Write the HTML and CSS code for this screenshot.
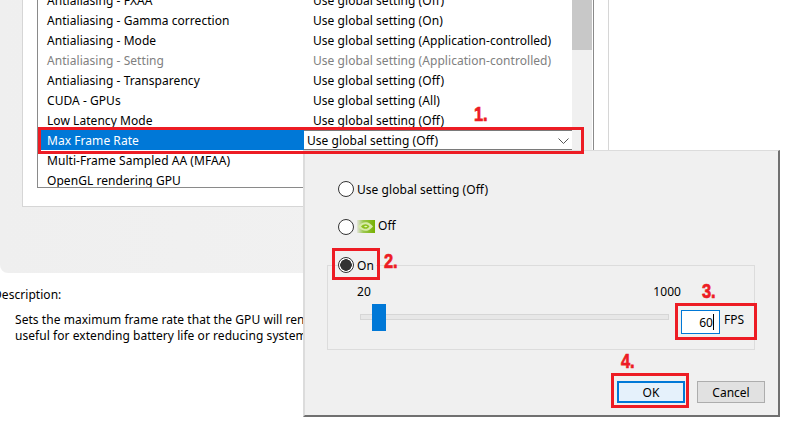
FILE: index.html
```html
<!DOCTYPE html>
<html lang="en">
<head>
<meta charset="utf-8">
<title>Max Frame Rate</title>
<link rel="stylesheet" href="styles.css">
</head>
<body>
<div class="page">
  <section class="panel">
    <div class="inner">
      <div class="listbox">
        <div class="rows">
          <div class="row"><span class="name">Antialiasing - FXAA</span><span class="val">Use global setting (Off)</span></div>
          <div class="row"><span class="name">Antialiasing - Gamma correction</span><span class="val">Use global setting (On)</span></div>
          <div class="row"><span class="name">Antialiasing - Mode</span><span class="val">Use global setting (Application-controlled)</span></div>
          <div class="row muted"><span class="name">Antialiasing - Setting</span><span class="val">Use global setting (Application-controlled)</span></div>
          <div class="row"><span class="name">Antialiasing - Transparency</span><span class="val">Use global setting (Off)</span></div>
          <div class="row"><span class="name">CUDA - GPUs</span><span class="val">Use global setting (All)</span></div>
          <div class="row"><span class="name">Low Latency Mode</span><span class="val">Use global setting (Off)</span></div>
          <div class="row selected"><span class="name">Max Frame Rate</span>
            <span class="combo">Use global setting (Off)
              <svg class="chevron" width="11" height="6" viewBox="0 0 11 6"><path d="M.5.5l5 5 5-5" fill="none" stroke="#555" stroke-width="1"/></svg>
            </span>
          </div>
          <div class="row"><span class="name">Multi-Frame Sampled AA (MFAA)</span></div>
          <div class="row"><span class="name">OpenGL rendering GPU</span></div>
        </div>
        <div class="scrollbar"><div class="thumb"></div></div>
      </div>
    </div>
  </section>
  <section class="desc">
    <p class="desc-title">Description:</p>
    <p class="desc-text">Sets the maximum frame rate that the GPU will render<br>useful for extending battery life or reducing system latency</p>
  </section>

  <div class="dialog">
    <label class="radio-row"><span class="radio"></span>Use global setting (Off)</label>
    <label class="radio-row"><span class="radio"></span>
      <svg class="nv" width="18" height="13" viewBox="0 0 18 13"><defs><linearGradient id="g" x1="0" x2="1" y1="0" y2="0"><stop offset="0" stop-color="#e4e4dc"/><stop offset=".35" stop-color="#9cc850"/><stop offset="1" stop-color="#76b000"/></linearGradient></defs><rect width="18" height="13" fill="url(#g)"/><path d="M1 6.500C4 2.500 8 1.500 11 2.500c2 .7 3.500 2.400 5 4-1.500 1.600-3 3.300-5 4-3 1-7 0-10-4z" fill="#d8eaa8"/><path d="M4 6.500C6 4 9 3.500 11 5c.8.6 1 1.200 1.500 1.500-.5.4-.8 1-1.500 1.500C9 9.500 6 9 4 6.500z" fill="#8cc020"/><path d="M7 6.500c1-1 2.500-1 3.500 0-1 1-2.500 1-3.500 0z" fill="#e6f2c4"/></svg>
      <span class="nv-label">Off</span></label>
    <div class="group">
      <label class="radio-row on-row"><span class="radio checked"></span>On</label>
      <div class="scale"><span>20</span><span>1000</span></div>
      <div class="control">
        <div class="slider"><div class="knob"></div></div>
        <div class="spin">60<span class="caret"></span></div>
        <span class="unit">FPS</span>
      </div>
    </div>
    <div class="buttons">
      <button class="btn primary">OK</button>
      <button class="btn">Cancel</button>
    </div>
  </div>

  <div class="mark mark-row"></div>
  <div class="mark mark-on"></div>
  <div class="mark mark-fps"></div>
  <div class="mark mark-ok"></div>
  <span class="step step1">1.</span>
  <span class="step step2">2.</span>
  <span class="step step3">3.</span>
  <span class="step step4">4.</span>
</div>
</body>
</html>
```
FILE: styles.css
```css
* { box-sizing: border-box; }
html, body { margin: 0; padding: 0; background: #fff; }
.page {
  position: relative;
  width: 800px;
  height: 437px;
  overflow: hidden;
  font-family: "Noto Sans", "Open Sans", sans-serif;
  font-size: 12px;
  letter-spacing: .05px;
  color: #000;
}
.panel {
  width: 609px;
  height: 273px;
  padding-left: 22px;
  background: linear-gradient(90deg, #efefef 0, #f1f1f1 60%, #f6f6f6 100%);
  border-bottom-left-radius: 8px;
}
.inner {
  height: 207px;
  padding-left: 14px;
  background: #fff;
  border-left: 1px solid #d6d6d6;
  border-right: 1px solid #d6d6d6;
  border-bottom: 1px solid #d6d6d6;
}
.listbox {
  display: flex;
  width: 557px;
  height: 188px;
  padding-right: 1px;
  border-left: 1px solid #8a8a8a;
  border-right: 1px solid #8a8a8a;
  border-bottom: 1px solid #8a8a8a;
  overflow: hidden;
}
.rows { width: 534px; margin-top: -10px; }
.row { display: flex; height: 20px; align-items: center; white-space: nowrap; }
.name { width: 266px; padding-left: 9px; flex: none; }
.val { padding-left: 9px; }
.muted { color: #808080; }
.selected { background: #0078d7; color: #fff; }
.combo {
  position: relative;
  flex: 1;
  height: 20px;
  line-height: 19px;
  padding-left: 3px;
  background: #fff;
  color: #000;
  border-top: 1px solid #7a7a7a;
  border-bottom: 1px solid #7a7a7a;
}
.chevron { position: absolute; right: 3px; top: 7px; }
.scrollbar { width: 20px; height: 188px; background: #f0f0f0; flex: none; }
.thumb { width: 20px; height: 50px; background: #c8c8c8; }

.desc { padding-top: 13px; white-space: nowrap; }
.desc p { margin: 0; }
.desc .desc-title { margin-left: -7px; line-height: 18px; }
.desc .desc-text { margin-top: 8px; padding-left: 15px; line-height: 16px; }

.dialog {
  position: absolute;
  left: 303px;
  top: 150px;
  width: 477px;
  height: 267px;
  padding: 28px 0 0 33px;
  background: #f0f0f0;
  border-top: 1px solid #dcdcdc;
  border-left: 2px solid #dcdcdc;
  border-right: 2px solid #707070;
  border-bottom: 2px solid #707070;
}
.radio-row { display: flex; align-items: center; height: 20px; margin-bottom: 18px; white-space: nowrap; }
.radio {
  width: 16px;
  height: 16px;
  margin-right: 3px;
  flex: none;
  background: #fff;
  border: 1px solid #333;
  border-radius: 50%;
}
.radio.checked {
  background: radial-gradient(circle, #333 0, #333 5.5px, #fff 6px);
}
.nv { margin: -2px 3px 0 0; flex: none; }
.nv-label { margin-top: -3px; }
.group {
  position: relative;
  width: 428px;
  height: 85px;
  margin: 28px 0 0 -11px;
  padding: 17px 0 0 29px;
  border: 1px solid #dcdcdc;
}
.on-row { position: absolute; left: 10px; top: -11px; margin: 0; background: #f0f0f0; padding-right: 2px; }
.scale { display: flex; justify-content: space-between; width: 324px; line-height: 18px; }
.control { display: flex; align-items: flex-start; margin-top: 3px; }
.slider {
  position: relative;
  width: 309px;
  height: 6px;
  margin: 10px 12px 0 3px;
  background: #e7e7e7;
  border: 1px solid #d6d6d6;
}
.knob { position: absolute; left: 11px; top: -11px; width: 14px; height: 27px; background: #0078d7; }
.spin {
  display: flex;
  justify-content: flex-end;
  align-items: center;
  width: 39px;
  height: 24px;
  margin-top: 6px;
  padding-right: 5px;
  background: #fff;
  border: 1px solid #0078d7;
}
.caret { width: 1px; height: 16px; background: #000; }
.unit { margin: 8px 0 0 4px; line-height: 16px; }
.buttons { display: flex; justify-content: flex-end; gap: 12px; margin: 31px 13px 0 0; }
.btn {
  width: 68px;
  height: 22px;
  padding: 0;
  font: inherit;
  color: #000;
  background: #e1e1e1;
  border: 1px solid #adadad;
}
.btn.primary { background: #e5f1fb; border: 2px solid #0078d7; }

.mark { position: absolute; border: 3px solid #ed1c24; }
.mark-row { left: 38px; top: 127px; width: 546px; height: 27px; }
.mark-on { left: 332px; top: 248px; width: 48px; height: 32px; }
.mark-fps { left: 675px; top: 303px; width: 82px; height: 37px; }
.mark-ok { left: 611px; top: 373px; width: 78px; height: 35px; }
.step {
  position: absolute;
  font-family: "Liberation Sans", sans-serif;
  font-weight: 700;
  font-size: 20px;
  line-height: 20px;
  letter-spacing: 0;
  color: #ed1c24;
  -webkit-text-stroke: .7px #ed1c24;
  transform: scaleX(.82);
  transform-origin: 0 0;
}
.step1 { left: 474px; top: 104px; }
.step2 { left: 384px; top: 251px; }
.step3 { left: 702px; top: 281px; }
.step4 { left: 621px; top: 351px; }
```
